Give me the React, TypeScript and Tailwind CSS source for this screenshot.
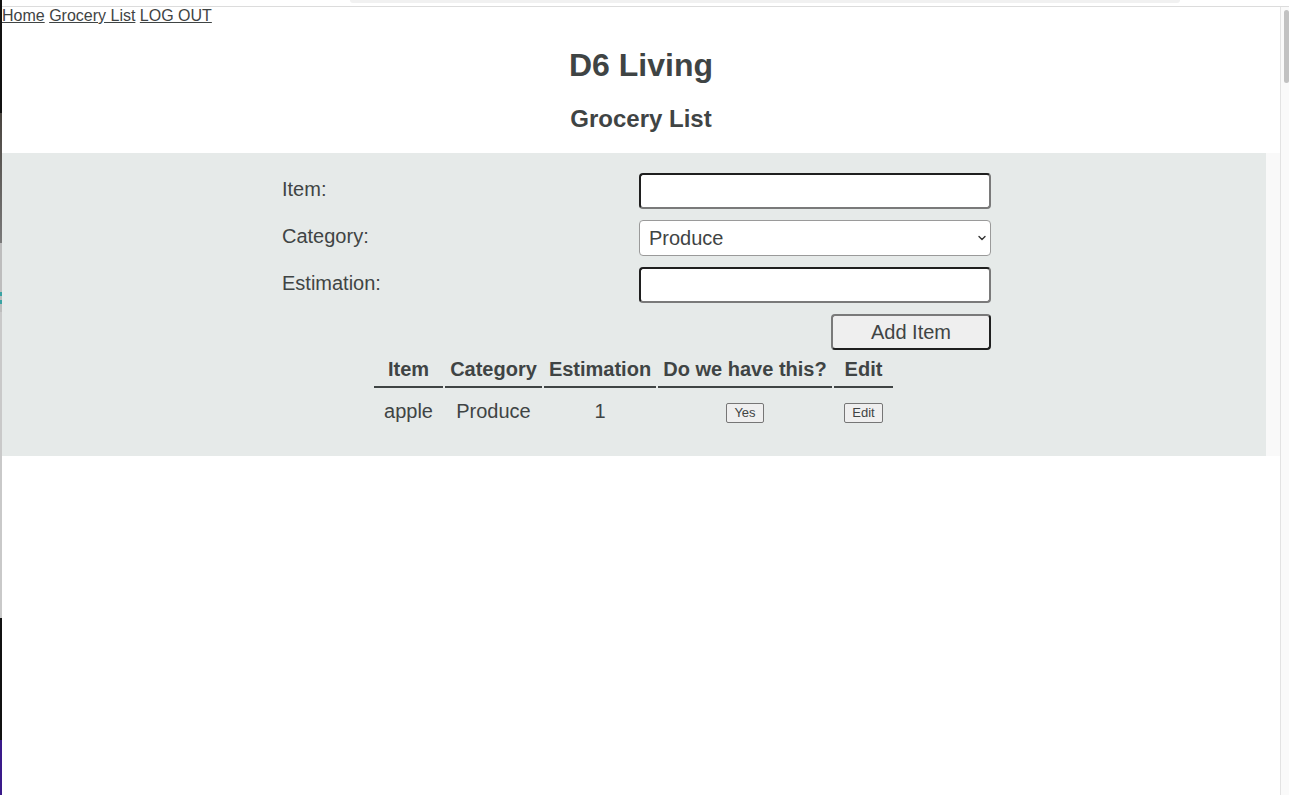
import React from 'react';

const Chevron: React.FC = () => (
  <svg width="10" height="10" viewBox="0 0 10 10" className="pointer-events-none absolute right-[4px] top-[13px]">
    <path d="M2 3.5 L5 6.5 L8 3.5" fill="none" stroke="#333" strokeWidth="1.4" strokeLinecap="round" strokeLinejoin="round" />
  </svg>
);

const inputCls =
  'h-[36px] w-[352px] rounded-[4px] border-2 border-t-[#1f1f1f] border-l-[#1f1f1f] border-b-[#7a7a7a] border-r-[#7a7a7a] bg-white px-[6px] text-[20px] outline-none';

const App: React.FC = () => {
  return (
    <div className="flex h-[795px] overflow-hidden bg-white font-['Liberation_Sans',Arial,sans-serif] text-[#3f4444]">
      {/* window behind, peeking on the left */}
      <div className="flex w-[2px] shrink-0 flex-col">
        <div className="h-[113px] bg-[#111]" />
        <div className="h-[130px] bg-gradient-to-b from-[#4a4540] to-[#7a7a7a]" />
        <div className="h-[49px] bg-[#bdbdbd]" />
        <div className="h-[4px] bg-[#3aa3a3]" />
        <div className="h-[4px] bg-[#bdbdbd]" />
        <div className="h-[4px] bg-[#3aa3a3]" />
        <div className="h-[8px] bg-[#bdbdbd]" />
        <div className="h-[306px] bg-[#c9c9c9]" />
        <div className="h-[122px] bg-[#111]" />
        <div className="flex-1 bg-[#3a1a8a]" />
      </div>

      <div className="flex flex-1 flex-col">
        <div className="h-[7px] shrink-0 border-b border-[#dcdcdc] bg-white">
          <div className="ml-[348px] h-[3px] w-[830px] rounded-b-[3px] bg-[#f1f1f1]" />
        </div>

        <div className="flex flex-1">
          <main className="flex flex-1 flex-col">
            <nav className="text-[16px] leading-[18px]">
              <a href="#" className="underline">Home</a>{' '}
              <a href="#" className="underline">Grocery List</a>{' '}
              <a href="#" className="underline">LOG OUT</a>
            </nav>

            <h1 className="mt-[22px] text-center text-[32px] font-bold leading-[37px]">D6 Living</h1>
            <h2 className="mt-[21px] text-center text-[24px] font-bold leading-[28px]">Grocery List</h2>

            <div className="mt-[20px] flex">
              <section className="w-[1264px] bg-[#e6eae9] pt-[20px] pb-[20px]">
                <form className="ml-[280px] grid w-[709px] grid-cols-[357px_352px] gap-y-[11px]" onSubmit={(e) => e.preventDefault()}>
                  <label className="pt-[5px] text-[20px] leading-[23px]">Item:</label>
                  <input type="text" className={inputCls} />

                  <label className="pt-[5px] text-[20px] leading-[23px]">Category:</label>
                  <div className="relative w-[352px]">
                    <select className="h-[36px] w-[352px] appearance-none rounded-[4px] border border-[#9a9a9a] bg-white pl-[9px] text-[20px] outline-none">
                      <option>Produce</option>
                      <option>Dairy</option>
                      <option>Meat</option>
                      <option>Pantry</option>
                    </select>
                    <Chevron />
                  </div>

                  <label className="pt-[5px] text-[20px] leading-[23px]">Estimation:</label>
                  <input type="text" className={inputCls} />

                  <div className="col-start-2 flex justify-end">
                    <button
                      type="submit"
                      className="h-[36px] w-[160px] rounded-[4px] border-2 border-t-[#7a7a7a] border-l-[#7a7a7a] border-b-[#1f1f1f] border-r-[#1f1f1f] bg-[#efefef] text-[20px] leading-[23px]"
                    >
                      Add Item
                    </button>
                  </div>
                </form>

                <table className="ml-[370px] mt-[6px] border-separate border-spacing-[2px] text-center">
                  <thead>
                    <tr className="text-[20px] font-bold leading-[23px]">
                      <th className="w-[69px] border-b-2 border-[#3f4444] px-0 pb-[5px]">Item</th>
                      <th className="w-[97px] border-b-2 border-[#3f4444] px-0 pb-[5px]">Category</th>
                      <th className="w-[112px] border-b-2 border-[#3f4444] px-0 pb-[5px]">Estimation</th>
                      <th className="w-[174px] border-b-2 border-[#3f4444] px-0 pb-[5px]">Do we have this?</th>
                      <th className="w-[59px] border-b-2 border-[#3f4444] px-0 pb-[5px]">Edit</th>
                    </tr>
                  </thead>
                  <tbody>
                    <tr className="text-[20px] leading-[23px]">
                      <td className="pt-[9px] pb-[11px]">apple</td>
                      <td className="pt-[9px] pb-[11px]">Produce</td>
                      <td className="pt-[9px] pb-[11px]">1</td>
                      <td className="pt-[9px] pb-[11px] align-middle">
                        <button className="mt-[3px] h-[20px] w-[38px] rounded-[2px] border border-[#767676] bg-[#efefef] text-[13px] leading-[18px] align-middle">
                          Yes
                        </button>
                      </td>
                      <td className="pt-[9px] pb-[11px] align-middle">
                        <button className="mt-[3px] h-[20px] w-[39px] rounded-[2px] border border-[#767676] bg-[#efefef] text-[13px] leading-[18px] align-middle">
                          Edit
                        </button>
                      </td>
                    </tr>
                  </tbody>
                </table>
              </section>
              <div className="w-[14px] bg-[#f9f9f9]" />
            </div>
          </main>

          {/* scrollbar */}
          <div className="w-[9px] shrink-0 border-l border-[#e3e3e3] bg-[#fafafa] pl-[3px] pt-[3px]">
            <div className="h-[73px] w-[5px] rounded-full bg-[#c2c2c2]" />
          </div>
        </div>
      </div>
    </div>
  );
};

export default App;
